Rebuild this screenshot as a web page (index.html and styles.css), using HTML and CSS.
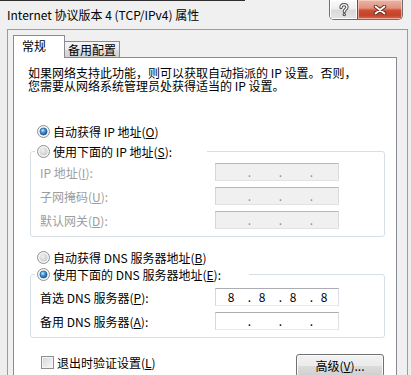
FILE: index.html
```html
<!DOCTYPE html>
<html lang="zh-CN">
<head>
<meta charset="utf-8">
<title>Internet 协议版本 4 (TCP/IPv4) 属性</title>
<link rel="stylesheet" href="styles.css">
</head>
<body>
<div class="titlebar">
  <div class="title">Internet 协议版本 4 (TCP/IPv4) 属性</div>
  <div class="caption">
    <div class="cap-help">
      <svg width="12" height="14" viewBox="0 0 12 14">
        <path d="M3 4.6 C3 2.6 4.4 1.6 6 1.6 C7.8 1.6 9 2.7 9 4.2 C9 6.2 6.3 6.3 6.3 8.6" fill="none" stroke="#4a4a4a" stroke-width="3.2" stroke-linecap="round"/>
        <circle cx="6.3" cy="11.6" r="1.7" fill="#4a4a4a"/>
        <path d="M3 4.6 C3 2.6 4.4 1.6 6 1.6 C7.8 1.6 9 2.7 9 4.2 C9 6.2 6.3 6.3 6.3 8.6" fill="none" stroke="#ffffff" stroke-width="1.3" stroke-linecap="round"/>
        <circle cx="6.3" cy="11.6" r="0.7" fill="#ffffff"/>
      </svg>
    </div>
    <div class="cap-close">
      <svg width="14" height="10" viewBox="0 0 14 10">
        <path d="M2.5 1.5 L11.5 8.5 M11.5 1.5 L2.5 8.5" stroke="#5a2a22" stroke-width="3.6" stroke-linecap="round"/>
        <path d="M2.5 1.5 L11.5 8.5 M11.5 1.5 L2.5 8.5" stroke="#ffffff" stroke-width="1.8" stroke-linecap="round"/>
      </svg>
    </div>
  </div>
</div>

<div class="client">
  <div class="tabs">
    <div class="tab tab-active">常规</div>
    <div class="tab tab-inactive">备用配置</div>
  </div>

  <div class="panel">
    <div class="intro">
      <div class="intro-line">如果网络支持此功能，则可以获取自动指派的 IP 设置。否则，</div>
      <div class="intro-line">您需要从网络系统管理员处获得适当的 IP 设置。</div>
    </div>

    <div class="opt opt-first">
      <svg class="radio" width="13" height="13" viewBox="0 0 13 13">
        <defs>
          <radialGradient id="dotA" cx="40%" cy="35%" r="70%"><stop offset="0" stop-color="#c4ecff"/><stop offset="0.45" stop-color="#3f93dc"/><stop offset="1" stop-color="#124f8a"/></radialGradient>
        </defs>
        <circle cx="6.5" cy="6.5" r="6" fill="#f6f6f6" stroke="#8e8f8f"/>
        <circle cx="6.5" cy="6.5" r="3.6" fill="url(#dotA)" stroke="#1d4f7c" stroke-width="0.6"/>
      </svg>
      <span>自动获得 IP 地址(<u>O</u>)</span>
    </div>

    <fieldset class="group group-ip">
      <legend class="legend legend-ip">
        <svg class="radio" width="13" height="13" viewBox="0 0 13 13">
          <defs>
            <radialGradient id="offA" cx="40%" cy="35%" r="70%"><stop offset="0" stop-color="#f2f2f2"/><stop offset="1" stop-color="#c9c9c9"/></radialGradient>
          </defs>
          <circle cx="6.5" cy="6.5" r="6" fill="#f6f6f6" stroke="#8e8f8f"/>
          <circle cx="6.5" cy="6.5" r="4" fill="url(#offA)"/>
        </svg>
        <span>使用下面的 IP 地址(<u>S</u>):</span>
      </legend>
      <div class="frow frow-first disabled">
        <span class="lbl">IP 地址(<u>I</u>):</span>
        <div class="ip ip-off"><span class="seg"></span><span class="dot">.</span><span class="seg"></span><span class="dot">.</span><span class="seg"></span><span class="dot">.</span><span class="seg"></span></div>
      </div>
      <div class="frow disabled">
        <span class="lbl">子网掩码(<u>U</u>):</span>
        <div class="ip ip-off"><span class="seg"></span><span class="dot">.</span><span class="seg"></span><span class="dot">.</span><span class="seg"></span><span class="dot">.</span><span class="seg"></span></div>
      </div>
      <div class="frow disabled">
        <span class="lbl">默认网关(<u>D</u>):</span>
        <div class="ip ip-off"><span class="seg"></span><span class="dot">.</span><span class="seg"></span><span class="dot">.</span><span class="seg"></span><span class="dot">.</span><span class="seg"></span></div>
      </div>
    </fieldset>

    <div class="opt opt-dns">
      <svg class="radio" width="13" height="13" viewBox="0 0 13 13">
        <defs>
          <radialGradient id="offB" cx="40%" cy="35%" r="70%"><stop offset="0" stop-color="#f2f2f2"/><stop offset="1" stop-color="#c9c9c9"/></radialGradient>
        </defs>
        <circle cx="6.5" cy="6.5" r="6" fill="#f6f6f6" stroke="#8e8f8f"/>
        <circle cx="6.5" cy="6.5" r="4" fill="url(#offB)"/>
      </svg>
      <span>自动获得 DNS 服务器地址(<u>B</u>)</span>
    </div>

    <fieldset class="group group-dns">
      <legend class="legend legend-dns">
        <svg class="radio" width="13" height="13" viewBox="0 0 13 13">
          <defs>
            <radialGradient id="dotB" cx="40%" cy="35%" r="70%"><stop offset="0" stop-color="#c4ecff"/><stop offset="0.45" stop-color="#3f93dc"/><stop offset="1" stop-color="#124f8a"/></radialGradient>
          </defs>
          <circle cx="6.5" cy="6.5" r="6" fill="#f6f6f6" stroke="#8e8f8f"/>
          <circle cx="6.5" cy="6.5" r="3.6" fill="url(#dotB)" stroke="#1d4f7c" stroke-width="0.6"/>
        </svg>
        <span>使用下面的 DNS 服务器地址(<u>E</u>):</span>
      </legend>
      <div class="frow frow-dns-first">
        <span class="lbl">首选 DNS 服务器(<u>P</u>):</span>
        <div class="ip ip-on"><span class="seg">8</span><span class="dot">.</span><span class="seg">8</span><span class="dot">.</span><span class="seg">8</span><span class="dot">.</span><span class="seg">8</span></div>
      </div>
      <div class="frow">
        <span class="lbl">备用 DNS 服务器(<u>A</u>):</span>
        <div class="ip ip-on"><span class="seg"></span><span class="dot">.</span><span class="seg"></span><span class="dot">.</span><span class="seg"></span><span class="dot">.</span><span class="seg"></span></div>
      </div>
    </fieldset>

    <div class="bottom">
      <label class="check"><span class="chk"></span><span>退出时验证设置(<u>L</u>)</span></label>
      <button class="btn" type="button">高级(<u>V</u>)...</button>
    </div>
  </div>
</div>
</body>
</html>
```
FILE: styles.css
```css
* { box-sizing: border-box; }
html, body { margin: 0; padding: 0; }
body {
  width: 411px;
  height: 375px;
  overflow: hidden;
  background: #eeeeee;
  font-family: "Noto Sans CJK SC", "Noto Sans", sans-serif;
  font-size: 12px;
  color: #000;
}
u { text-decoration: underline; text-underline-offset: 1px; }

/* title bar */
.titlebar {
  height: 29px;
  display: flex;
  align-items: flex-start;
  background:
    linear-gradient(to right, #2e2e2e 245px, transparent 245px) top left / 100% 1px no-repeat,
    #f0f0f0;
}
.title {
  margin: 7px 0 0 7px;
  line-height: 16px;
  font-size: 12px;
  color: #000;
  white-space: nowrap;
}
.caption {
  margin-left: auto;
  margin-right: 8px;
  display: flex;
  width: 74px;
  height: 20px;
  border: 1px solid #6f6f6f;
  border-top: none;
  border-radius: 0 0 5px 5px;
  overflow: hidden;
}
.cap-help {
  width: 27px;
  display: flex;
  align-items: center;
  justify-content: center;
  background: linear-gradient(#fbfbfb 0%, #eeeeee 45%, #dadada 55%, #e4e4e4 100%);
  box-shadow: inset 0 0 0 1px #ffffff;
}
.cap-close {
  flex: 1;
  display: flex;
  align-items: center;
  justify-content: center;
  border-left: 1px solid #6f4a42;
  background: linear-gradient(#eab4a6 0%, #e29380 42%, #cc4d31 55%, #c4432a 80%, #d56a50 100%);
  box-shadow: inset 0 0 0 1px rgba(255, 220, 210, 0.6);
}

/* client area */
.client {
  margin-left: 7px;
  width: 401px;
  height: 346px;
  border: 1px solid #9c9c9c;
  border-bottom: none;
  background: #f0f0f0;
  padding: 5px 0 0 5px;
}
.tabs {
  display: flex;
  align-items: flex-end;
  height: 22px;
}
.tab {
  border: 1px solid #898c95;
  border-bottom: none;
  white-space: nowrap;
}
.tab-active {
  position: relative;
  z-index: 1;
  width: 52px;
  height: 23px;
  margin-bottom: -1px;
  padding: 1px 0 0 8px;
  line-height: 17px;
  background: #ffffff;
}
.tab-inactive {
  width: 56px;
  height: 16px;
  margin-left: -1px;
  line-height: 15px;
  text-align: center;
  background: linear-gradient(#f4f4f4 0%, #ececec 50%, #dedede 50%, #d2d2d2 100%);
}

.panel {
  width: 384px;
  height: 330px;
  border: 1px solid #898c95;
  background: #ffffff;
  padding: 8px 0 0 14px;
}
.intro {
  white-space: nowrap;
}
.intro-line {
  height: 13px;
  line-height: 13px;
}

.opt {
  display: flex;
  align-items: center;
  height: 16px;
  margin-left: 9px;
  white-space: nowrap;
}
.opt-first { margin-top: 31px; }
.opt-dns { margin-top: 12px; }
.radio { flex: none; margin-right: 3px; }

.group {
  margin: 5px 11px 0 2px;
  padding: 0 0 7px 0;
  border: 1px solid #d5dfe5;
  border-radius: 3px;
  min-width: 0;
}
.group-dns { margin-top: 2px; }
.legend {
  display: flex;
  align-items: center;
  height: 15px;
  margin-left: 4px;
  padding: 0 2px;
  white-space: nowrap;
}
.legend-ip { width: 172px; }
.legend-dns { width: 214px; }

.frow {
  display: flex;
  align-items: center;
  height: 18px;
  margin-top: 6px;
  padding-left: 9px;
  white-space: nowrap;
}
.frow-first { margin-top: 4px; }
.frow-dns-first { margin-top: 6px; }
.lbl { width: 175px; flex: none; }
.disabled .lbl { color: #9d9d9d; }

.ip {
  width: 124px;
  height: 18px;
  display: flex;
  padding-left: 4px;
  line-height: 16px;
  border: 1px solid #dedede;
}
.ip-off {
  background: #f0f0f0;
  border-color: #b7b7b7 #dadada #e2e2e2 #d6d6d6;
  color: #8f8f8f;
}
.ip-on {
  background: #ffffff;
  border-color: #acadb3 #dbdfe6 #e3e9ef #d5d8de;
  color: #000;
}
.seg { width: 22px; text-align: center; }
.dot { width: 9px; text-align: right; }

.bottom {
  display: flex;
  align-items: flex-start;
  justify-content: space-between;
  margin: 16px 12px 0 13px;
}
.check {
  display: flex;
  align-items: center;
  height: 14px;
  margin-top: 1px;
  white-space: nowrap;
}
.chk {
  width: 13px;
  height: 13px;
  margin-right: 3px;
  border: 1px solid #8e8f8f;
  background: linear-gradient(135deg, #d4d4d4 0%, #ebebeb 60%, #f7f7f7 100%);
  box-shadow: inset 0 0 0 1px #f4f4f4;
}
.btn {
  width: 88px;
  height: 23px;
  padding: 0;
  font: inherit;
  color: #000;
  line-height: 20px;
  text-align: center;
  border: 1px solid #707070;
  border-radius: 3px;
  background: linear-gradient(#f2f2f2 0%, #ebebeb 50%, #dddddd 50%, #cfcfcf 100%);
  box-shadow: inset 0 0 0 1px #fbfbfb;
}
```
